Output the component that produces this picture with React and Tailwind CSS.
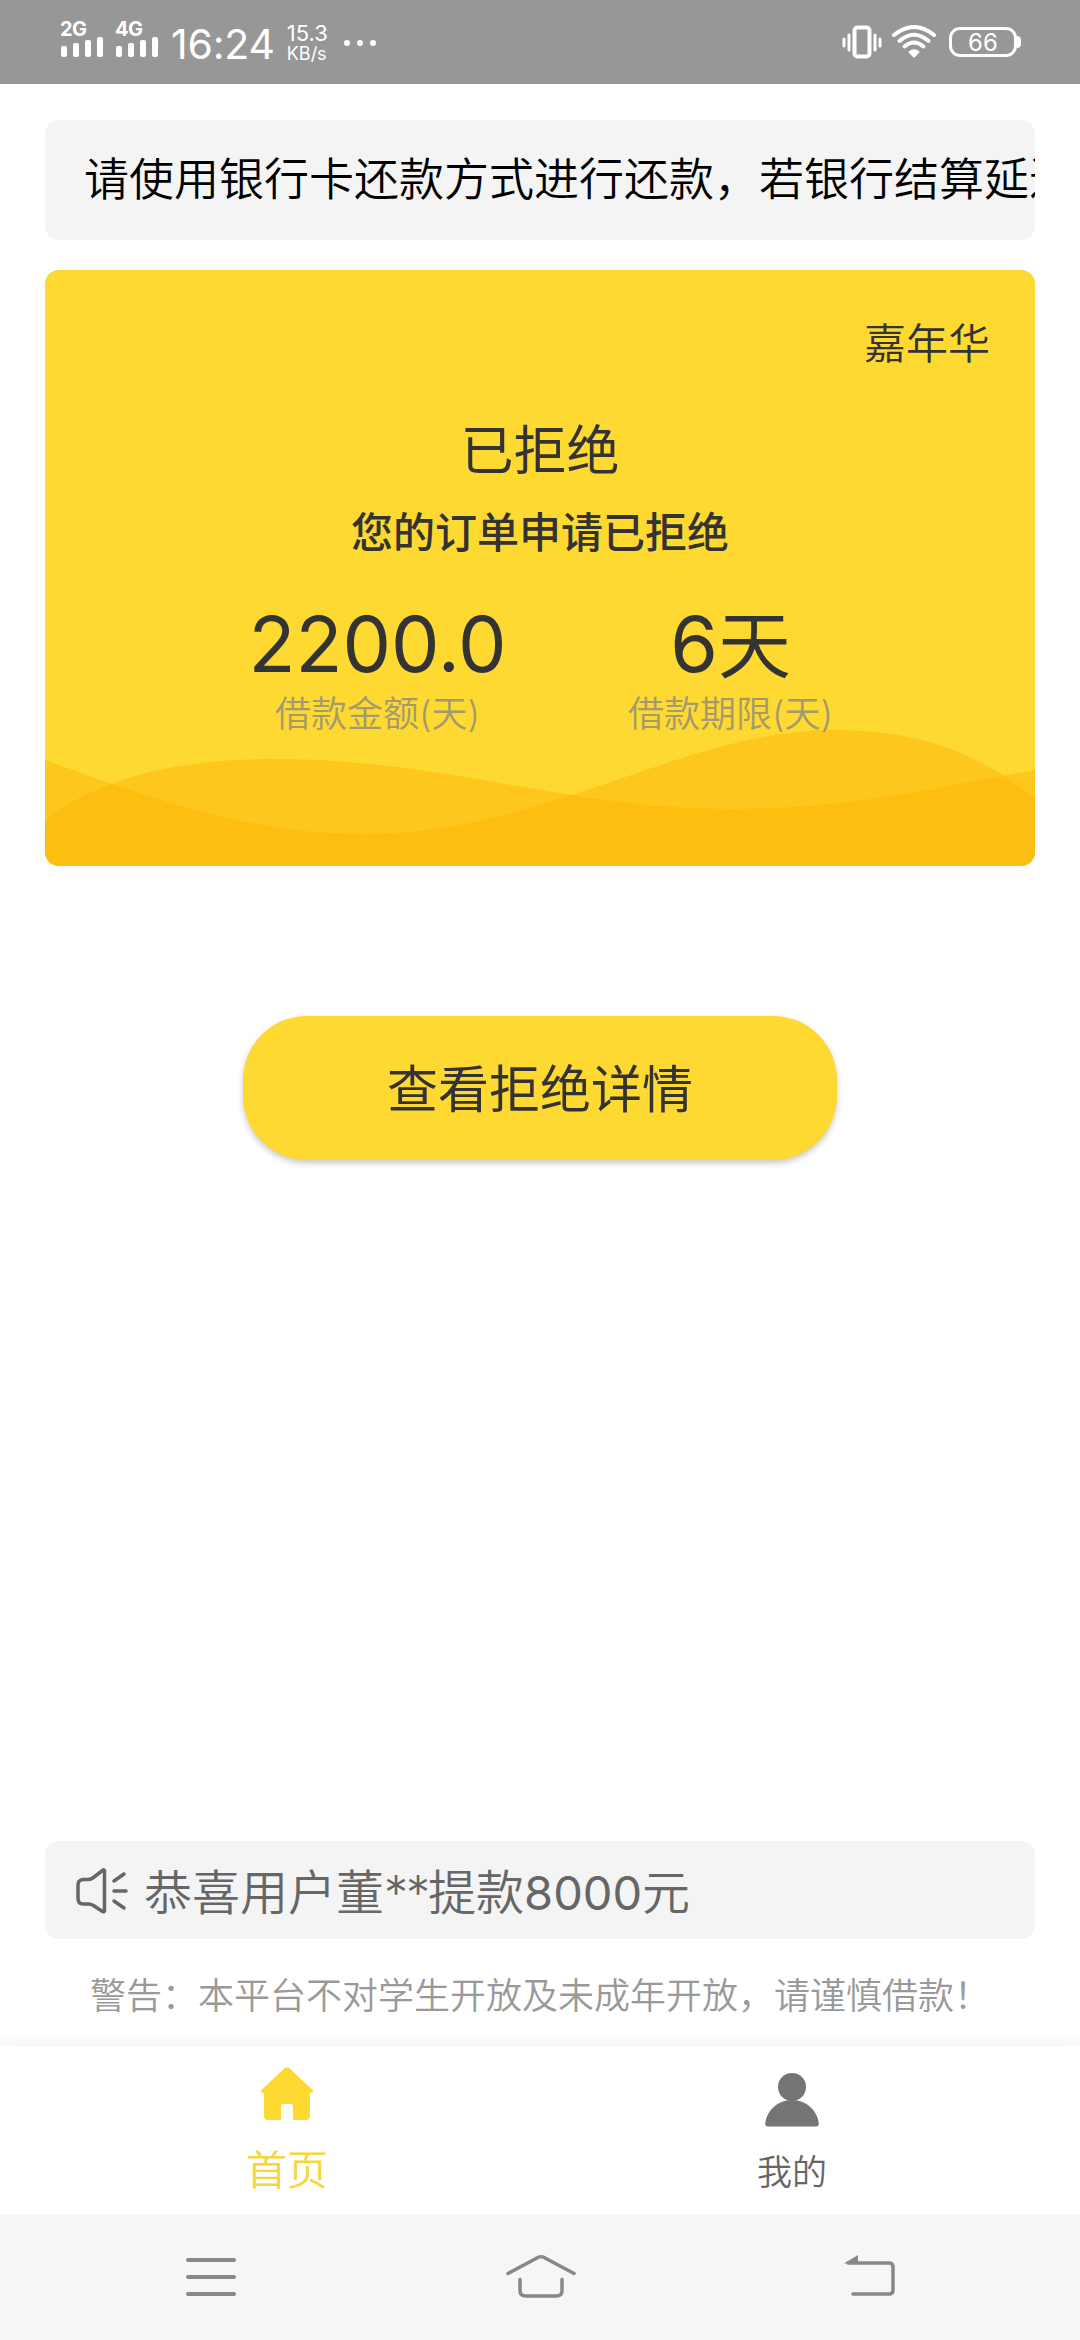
import React from "react";

const SignalBars = ({ label }) => {
  const bars = ["h-[11px]", "h-3.5", "h-[17px]", "h-5"];

  return (
    <div className="flex flex-col">
      <span className="text-[20px] leading-[15px] font-bold tracking-[-0.5px]">{label}</span>
      <div className="flex h-5 items-end gap-1.5 pl-[1px]">
        {bars.map((height, index) => (
          <span key={index} className={`w-1.5 rounded-[2px] bg-white ${height}`} />
        ))}
      </div>
    </div>
  );
};

const StatusBar = () => {
  return (
    <div className="flex h-[84px] items-start bg-[#979797] pl-[60px] text-white">
      <div className="flex gap-3 pt-[22px]">
        <SignalBars label="2G" />
        <SignalBars label="4G" />
      </div>
      <span className="ml-[13px] mt-[20px] text-[41px] leading-[48px] tracking-[-0.2px]">16:24</span>
      <div className="ml-3 mt-[23px] flex flex-col">
        <span className="text-[22px] leading-[21px]">15.3</span>
        <span className="text-[18px] leading-[19px]">KB/s</span>
      </div>
      <div className="ml-[16px] mt-[40px] flex gap-[7px]">
        <span className="size-[6px] rounded-full bg-white" />
        <span className="size-[6px] rounded-full bg-white" />
        <span className="size-[6px] rounded-full bg-white" />
      </div>
      <div className="ml-auto flex h-[84px] items-center pr-[59px]">
        <svg className="h-[34px] w-[40px]" viewBox="0 0 40 34" fill="none" stroke="#fff" strokeLinecap="round">
          <rect x="12.5" y="2.5" width="15" height="29" rx="3" strokeWidth="4" />
          <path d="M7 10v15M33 10v15" strokeWidth="3" />
          <path d="M2 14v7M38 14v7" strokeWidth="3" />
        </svg>
        <svg className="ml-[9px] h-[34px] w-[46px]" viewBox="0 0 46 34" fill="none" stroke="#fff" strokeWidth="4" strokeLinecap="round">
          <path d="M3 10Q23 -6 43 10" />
          <path d="M8.500 16Q23 3.500 37.500 16" />
          <path d="M13.500 21.500Q23 13.500 32.500 21.500" />
          <path d="M18.500 27Q23 23.500 27.500 27L23 31.500Z" fill="#fff" strokeWidth="2" strokeLinejoin="round" />
        </svg>
        <div className="ml-3 flex items-center">
          <span className="flex h-[30px] w-[68px] items-center justify-center rounded-[11px] border-[3px] border-white pt-[1px] text-[24px] leading-[24px]">
            66
          </span>
          <span className="h-3 w-1 rounded-r-full bg-white" />
        </div>
      </div>
    </div>
  );
};

const LoanCard = () => {
  const stats = [
    { id: 1, value: "2200.0", unit: "", label: "借款金额(天)" },
    { id: 2, value: "6", unit: "天", label: "借款期限(天)" },
  ];

  return (
    <div className="relative mx-[45px] mt-[30px] h-[596px] overflow-hidden rounded-[14px] bg-[#fdd932] text-[#333]">
      <svg className="absolute inset-0 h-full w-full" viewBox="0 0 990 596">
        <path
          d="M0 490C110 530 205 564 320 564C500 564 640 460 788 460C880 460 940 487 990 529V596H0Z"
          fill="#ffb304"
          fillOpacity="0.46"
        />
        <path
          d="M0 550C55 508 130 489 230 489C400 489 520 539 690 539C800 539 890 518 990 500V596H0Z"
          fill="#ffb304"
          fillOpacity="0.46"
        />
      </svg>
      <div className="relative flex flex-col">
        <p className="pr-[45px] pt-[44px] text-right text-[42px] leading-[60px] font-[350]">嘉年华</p>
        <p className="mt-[41px] text-center text-[53px] leading-[72px]">已拒绝</p>
        <p className="mt-[16px] text-center text-[42px] leading-[60px] font-medium">您的订单申请已拒绝</p>
        <div className="mt-[36px] ml-[156px] flex">
          {stats.map((stat) => (
            <div key={stat.id} className="flex w-[353px] flex-col items-center">
              <p className="h-[90px] text-[77px] leading-[90px]">
                {stat.value}
                {stat.unit && <span className="text-[73px] leading-[80px]">{stat.unit}</span>}
              </p>
              <p className="mt-[1px] text-[36px] leading-[48px] font-[350] text-[#a5996f]">{stat.label}</p>
            </div>
          ))}
        </div>
      </div>
    </div>
  );
};

const TabBar = () => {
  return (
    <div className="flex h-[168px] bg-white shadow-[0_-4px_14px_rgba(0,0,0,0.05)]">
      <div className="flex w-[574px] flex-col items-center pt-[21px] text-[#f5d63b]">
        <svg className="h-[54px] w-[56px]" viewBox="0 0 56 54">
          <path
            d="M25.500 1.200Q28 -0.500 30.500 1.200L53.500 23Q55.500 26 51 26V49Q51 53 47 53H34V39Q34 37 32 37H24Q22 37 22 39V53H9Q5 53 5 49V26Q0.500 26 2.500 23Z"
            fill="#fdd932"
          />
        </svg>
        <span className="mt-[20px] text-[41px] leading-[58px] font-[350]">首页</span>
      </div>
      <div className="flex w-[436px] flex-col items-center pt-[27px] text-[#666]">
        <svg className="h-[54px] w-[54px]" viewBox="0 0 54 54" fill="#757575">
          <circle cx="27" cy="14" r="14" />
          <path d="M3 53.500Q0 53.500 0.300 50C2 37 13 27 27 27S52 37 53.700 50Q54 53.500 51 53.500Z" />
        </svg>
        <span className="mt-[20px] text-[35px] leading-[50px] font-[350]">我的</span>
      </div>
    </div>
  );
};

const SystemNav = () => {
  return (
    <div className="flex h-[126px] items-center justify-between bg-[#f6f6f6] pl-[186px] pr-[185px]">
      <svg className="h-[50px] w-[50px]" viewBox="0 0 50 50" stroke="#888" strokeWidth="4" strokeLinecap="round">
        <path d="M2 8h46M2 25h46M2 42h46" />
      </svg>
      <svg className="ml-[2px] h-[50px] w-[70px]" viewBox="0 0 70 50" fill="none" stroke="#888" strokeWidth="3.5" strokeLinecap="round">
        <path d="M2 21.500L30 6.500Q35 3 40 6.500L68 21.500" />
        <path d="M14 27.500V39Q14 44 20 44H50Q56 44 56 39V27.500" />
      </svg>
      <svg className="h-[50px] w-[52px]" viewBox="0 0 52 50" fill="none" stroke="#888" strokeWidth="3.500" strokeLinecap="round">
        <path d="M5 11H46Q50 11 50 15V38Q50 42 46 42H10" />
        <path d="M1 11.500L15 3V11.500Z" fill="#888" stroke="none" />
      </svg>
    </div>
  );
};

const App = () => {
  return (
    <div className="flex h-[2340px] w-[1080px] flex-col overflow-hidden bg-white font-[Inter,'Noto_Sans_CJK_SC',sans-serif]">
      <StatusBar />
      <div className="mx-[45px] mt-9 flex h-[120px] items-center overflow-hidden rounded-[14px] bg-[#f4f4f4] pl-[39px]">
        <p className="text-[45px] leading-[64px] font-[350] whitespace-nowrap text-black">
          请使用银行卡还款方式进行还款，若银行结算延迟
        </p>
      </div>
      <LoanCard />
      <button className="mx-auto mt-[150px] h-[144px] w-[594px] rounded-[64px] bg-[#fdd932] pt-[4px] text-[51px] leading-[72px] text-[#333] shadow-[0_3px_6px_rgba(0,0,0,0.22)]">
        查看拒绝详情
      </button>
      <div className="mx-[45px] mt-auto flex h-[98px] items-center rounded-[14px] bg-[#f4f4f4] pl-[30px] text-[#666]">
        <svg className="h-[60px] w-[54px]" viewBox="0 0 54 60" fill="none" stroke="#666" strokeWidth="3.500" strokeLinecap="round" strokeLinejoin="round">
          <path d="M29.500 11Q29.500 9 27.500 10.500L18.500 17.500Q16 19.500 13 19.500H8Q3 20 3 25V38Q3 44 8 44H14Q16 44 18.500 45.500L27.500 51.500Q29.500 52.500 29.500 50.500Z" />
          <path d="M39 21L49 14M39 31H51M39 41L49 48" />
        </svg>
        <p className="ml-[15px] pt-[5px] text-[48px] leading-[68px] font-[350]">
          恭喜用户董<span className="tracking-[-2px]">**</span>提款
          <span className="text-[47px] font-normal">8000</span>元
        </p>
      </div>
      <p className="mt-[31px] mb-[24px] pl-[90px] text-[36px] leading-[52px] font-[350] text-[#999]">
        警告：本平台不对学生开放及未成年开放，请谨慎借款！
      </p>
      <TabBar />
      <SystemNav />
    </div>
  );
};

export default App;
